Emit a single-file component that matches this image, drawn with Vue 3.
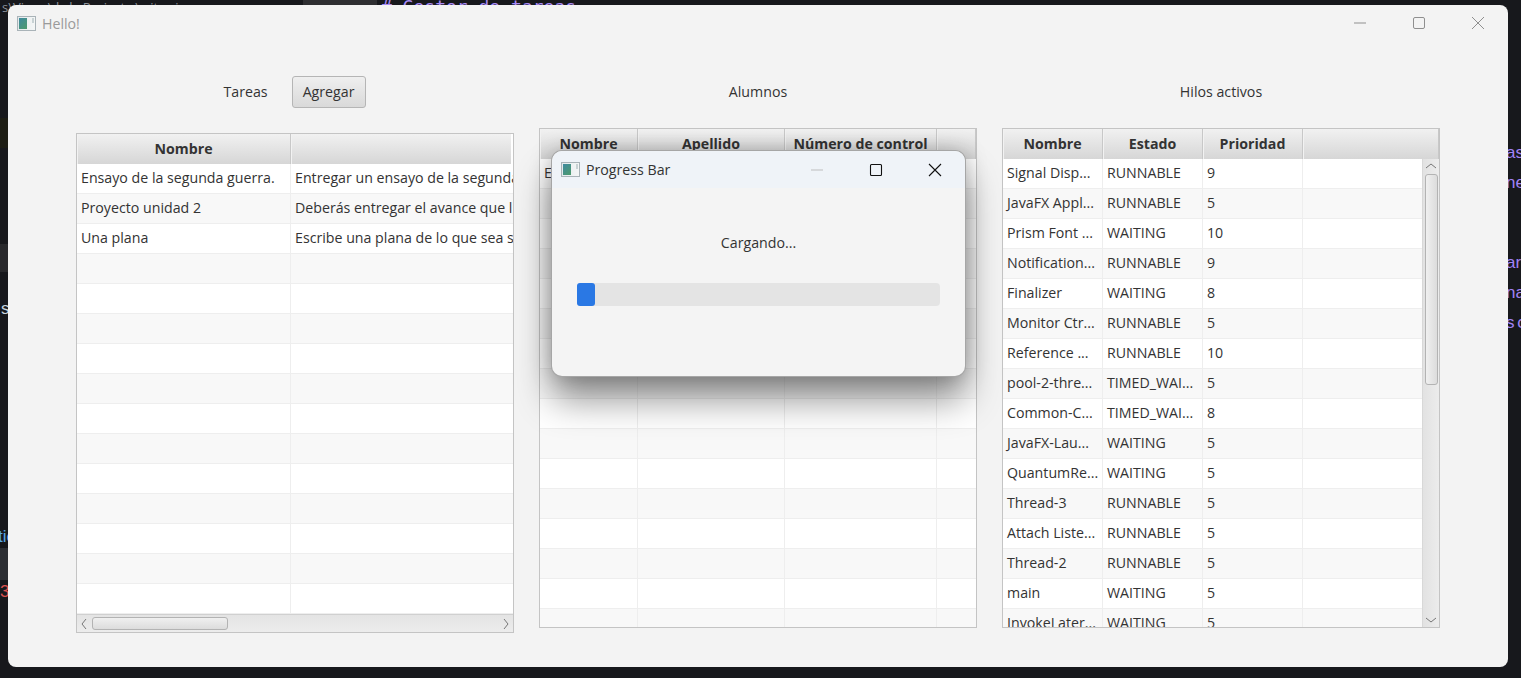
<script setup>
const tasks = [
  ["Ensayo de la segunda guerra.", "Entregar un ensayo de la segunda guerra mundial"],
  ["Proyecto unidad 2", "Deberás entregar el avance que llevas del proyecto"],
  ["Una plana", "Escribe una plana de lo que sea sobre el tema"],
];
const threads = [
  ["Signal Disp...", "RUNNABLE", "9"],
  ["JavaFX Appl...", "RUNNABLE", "5"],
  ["Prism Font ...", "WAITING", "10"],
  ["Notification...", "RUNNABLE", "9"],
  ["Finalizer", "WAITING", "8"],
  ["Monitor Ctr...", "RUNNABLE", "5"],
  ["Reference ...", "RUNNABLE", "10"],
  ["pool-2-thre...", "TIMED_WAI...", "5"],
  ["Common-C...", "TIMED_WAI...", "8"],
  ["JavaFX-Lau...", "WAITING", "5"],
  ["QuantumRe...", "WAITING", "5"],
  ["Thread-3", "RUNNABLE", "5"],
  ["Attach Liste...", "RUNNABLE", "5"],
  ["Thread-2", "RUNNABLE", "5"],
  ["main", "WAITING", "5"],
  ["InvokeLater...", "WAITING", "5"],
];

const taskRows = Array.from({ length: 16 }, (_, i) => tasks[i] || ["", ""]);
const studentRows = Array.from({ length: 16 }, (_, i) => (i === 0 ? "E" : ""));
</script>

<template>
  <div class="desktop">
    <span class="bg-band tab"></span>
    <div class="bg-text heading"># Gestor de tareas</div>
    <div class="bg-text crumbs">s\Vi · · · \ l · l · Project · \ · it · · i</div>
    <span class="bg-band yellow"></span>
    <span class="bg-band grey"></span>
    <span class="bg-band slate"></span>
    <span class="bg-frag left" style="top: 299px">sc</span>
    <span class="bg-frag left blue" style="top: 527px">tic</span>
    <span class="bg-frag left red" style="top: 582px">3</span>
    <span class="bg-frag right" style="top: 143px">as</span>
    <span class="bg-frag right" style="top: 173px">ne</span>
    <span class="bg-frag right" style="top: 253px">ar</span>
    <span class="bg-frag right" style="top: 283px">na</span>
    <span class="bg-frag right" style="top: 313px">s c</span>

    <section class="window">
      <header class="titlebar">
        <span class="app-icon"><i></i><b></b></span>
        <span class="title">Hello!</span>
        <div class="controls">
          <svg width="14" height="14" viewBox="0 0 14 14"><path d="M1 7h12" /></svg>
          <svg width="14" height="14" viewBox="0 0 14 14"><rect x="1.5" y="1.5" width="11" height="11" rx="1.5" /></svg>
          <svg width="14" height="14" viewBox="0 0 14 14"><path d="M1 1l12 12M13 1L1 13" /></svg>
        </div>
      </header>

      <div class="columns">
        <div class="column">
          <div class="col-head first">
            <span class="label">Tareas</span>
            <button class="add" type="button">Agregar</button>
          </div>
          <div class="table tasks">
            <div class="thead">
              <div class="th" style="width: 214px">Nombre</div>
              <div class="th grow"></div>
            </div>
            <div class="tbody">
              <div v-for="(row, i) in taskRows" :key="i" class="tr" :class="{ odd: i % 2 }">
                <div class="td" style="width: 214px">{{ row[0] }}</div>
                <div class="td grow">{{ row[1] }}</div>
              </div>
            </div>
            <div class="hscroll">
              <svg width="8" height="12" viewBox="0 0 8 12"><path d="M6 1L2 6l4 5" /></svg>
              <span class="hthumb"></span>
              <svg class="end" width="8" height="12" viewBox="0 0 8 12"><path d="M2 1l4 5-4 5" /></svg>
            </div>
          </div>
        </div>

        <div class="column raised">
          <div class="col-head"><span class="label">Alumnos</span></div>
          <div class="table">
            <div class="thead">
              <div class="th" style="width: 98px">Nombre</div>
              <div class="th" style="width: 147px">Apellido</div>
              <div class="th" style="width: 152px">Número de control</div>
              <div class="th grow"></div>
            </div>
            <div class="tbody">
              <div v-for="(name, i) in studentRows" :key="i" class="tr" :class="{ odd: i % 2 }">
                <div class="td" style="width: 98px">{{ name }}</div>
                <div class="td" style="width: 147px"></div>
                <div class="td" style="width: 152px"></div>
                <div class="td grow"></div>
              </div>
            </div>
          </div>
        </div>

        <div class="column raised">
          <div class="col-head"><span class="label">Hilos activos</span></div>
          <div class="table">
            <div class="thead">
              <div class="th" style="width: 100px">Nombre</div>
              <div class="th" style="width: 100px">Estado</div>
              <div class="th" style="width: 100px">Prioridad</div>
              <div class="th grow"></div>
            </div>
            <div class="body-wrap">
              <div class="tbody">
                <div v-for="(row, i) in threads" :key="i" class="tr" :class="{ odd: i % 2 }">
                  <div class="td" style="width: 100px">{{ row[0] }}</div>
                  <div class="td" style="width: 100px">{{ row[1] }}</div>
                  <div class="td" style="width: 100px">{{ row[2] }}</div>
                  <div class="td grow"></div>
                </div>
              </div>
              <div class="vscroll">
                <svg width="12" height="8" viewBox="0 0 12 8"><path d="M1 6l5-4 5 4" /></svg>
                <span class="vthumb"></span>
                <svg class="vend" width="12" height="8" viewBox="0 0 12 8"><path d="M1 2l5 4 5-4" /></svg>
              </div>
            </div>
          </div>
        </div>
      </div>
    </section>

    <section class="dialog">
      <header class="dialog-bar">
        <span class="app-icon"><i></i><b></b></span>
        <span class="dialog-title">Progress Bar</span>
        <div class="dialog-controls">
          <svg width="14" height="14" viewBox="0 0 14 14"><path class="faint" d="M1 7h12" /></svg>
          <svg width="14" height="14" viewBox="0 0 14 14"><rect x="1.5" y="1.5" width="11" height="11" rx="1" /></svg>
          <svg width="14" height="14" viewBox="0 0 14 14"><path d="M1 1l12 12M13 1L1 13" /></svg>
        </div>
      </header>
      <div class="dialog-body">
        <div class="loading">Cargando...</div>
        <div class="track"><div class="bar"></div></div>
      </div>
    </section>
  </div>
</template>

<style>
html,
body {
  margin: 0;
  overflow: hidden;
  background: #17181c;
}
</style>

<style scoped>
.desktop {
  position: relative;
  width: 1521px;
  height: 678px;
  overflow: hidden;
  background: #17181c;
  font-family: "Open Sans", "Noto Sans", sans-serif;
  font-size: 14.2px;
  color: #333;
}

.bg-text {
  position: absolute;
  white-space: nowrap;
}

.heading {
  left: 381px;
  top: -4px;
  font-family: "DejaVu Sans Mono", monospace;
  font-size: 18px;
  color: #a98bf5;
}

.crumbs {
  left: 2px;
  top: -2px;
  font-size: 13px;
  color: #8d939b;
}

.bg-band {
  position: absolute;
  left: 0;
  width: 8px;
}

.bg-band.tab {
  left: 303px;
  top: 0;
  width: 74px;
  height: 5px;
  background: #2e2e31;
}

.yellow {
  top: 118px;
  height: 30px;
  background: #1d1d14;
}

.grey {
  top: 244px;
  height: 28px;
  background: #28282b;
}

.slate {
  top: 548px;
  height: 32px;
  background: #2c2e33;
}

.bg-frag {
  position: absolute;
  font-family: "Liberation Sans", sans-serif;
  font-size: 17px;
  line-height: 20px;
  color: #a283f5;
  white-space: nowrap;
}

.bg-frag.left {
  left: 1px;
  color: #c9d4de;
}

.bg-frag.left.blue {
  left: -2px;
  color: #5aa7e6;
}

.bg-frag.left.red {
  left: 0;
  color: #d9504f;
}

.bg-frag.right {
  left: 1506px;
  word-spacing: -2px;
}

.window {
  position: absolute;
  left: 8px;
  top: 5px;
  width: 1500px;
  height: 662px;
  border-radius: 8px;
  background: #f3f3f3;
  overflow: hidden;
}

.titlebar {
  display: flex;
  align-items: center;
  height: 36px;
  padding-left: 9px;
  color: #9a9a9a;
}

.app-icon {
  display: flex;
  flex: none;
  width: 19px;
  height: 15px;
  padding: 1px;
  box-sizing: border-box;
  border: 1px solid #a9b3b8;
  background: linear-gradient(90deg, #e4eaec, #f4f6f6);
}

.app-icon i {
  width: 8px;
  background: linear-gradient(135deg, #3f8aa0, #4d9a6b);
}

.app-icon b {
  width: 2px;
  height: 5px;
  margin-left: 5px;
  background: #c8d2d4;
}

.title {
  margin-left: 6px;
}

.controls {
  display: flex;
  gap: 45px;
  margin-left: auto;
  margin-right: 23px;
}

.controls svg {
  fill: none;
  stroke: #8f8f8f;
  stroke-width: 1;
}

.columns {
  display: flex;
  gap: 25px;
  padding: 35px 68px 0;
}

.column {
  width: 438px;
}

.col-head {
  display: flex;
  align-items: center;
  justify-content: center;
  gap: 25px;
  height: 32px;
  margin-bottom: 25px;
  color: #333;
}

.col-head.first {
  gap: 24px;
  padding-right: 1px;
}

.column.raised .col-head {
  margin-bottom: 20px;
}

.label {
  padding-bottom: 2px;
}

.add {
  width: 74px;
  height: 32px;
  padding: 0 0 2px;
  border: 1px solid #b5b5b5;
  border-radius: 3px;
  background: linear-gradient(#efefef, #d9d9d9);
  color: #333;
  font: inherit;
}

.table {
  display: flex;
  flex-direction: column;
  height: 500px;
  box-sizing: border-box;
  border: 1px solid #c4c4c4;
  background: #fff;
  overflow: hidden;
}

.thead {
  display: flex;
  flex: none;
  height: 30px;
}

.th {
  flex: none;
  height: 30px;
  box-sizing: border-box;
  border-right: 1px solid #c8c8c8;
  background: linear-gradient(#f1f1f1, #d6d6d6);
  box-shadow: inset 1px 0 0 #f2f2f2;
  font-weight: 700;
  line-height: 29px;
  text-align: center;
  color: #333;
}

.th.grow {
  flex: 1;
}

.tasks .th.grow {
  border-right: 2px solid #fff;
}

.tbody {
  flex: 1;
  min-width: 0;
  min-height: 0;
  overflow: hidden;
}

.tr {
  display: flex;
  height: 30px;
  box-sizing: border-box;
  border-bottom: 1px solid #eee;
  background: #fff;
}

.tr.odd {
  background: #f8f8f8;
}

.td {
  flex: none;
  box-sizing: border-box;
  padding-left: 4px;
  border-right: 1px solid #eee;
  line-height: 28px;
  white-space: nowrap;
  overflow: hidden;
}

.td.grow {
  flex: 1;
  border-right: 0;
}

.hscroll {
  display: flex;
  flex: none;
  align-items: center;
  height: 18px;
  padding: 0 3px;
  border-top: 1px solid #d0d0d0;
  box-sizing: border-box;
  background: linear-gradient(#e4e4e4, #ececec);
}

.hscroll svg,
.vscroll svg {
  flex: none;
  fill: none;
  stroke: #777;
  stroke-width: 1;
}

.hthumb {
  width: 136px;
  height: 13px;
  margin-left: 4px;
  box-sizing: border-box;
  border: 1px solid #b3b3b3;
  border-radius: 3px;
  background: linear-gradient(#f0f0f0, #dcdcdc);
}

.end {
  margin-left: auto;
}

.body-wrap {
  display: flex;
  flex: 1;
  min-height: 0;
}

.vscroll {
  display: flex;
  flex: none;
  flex-direction: column;
  align-items: center;
  width: 17px;
  padding: 3px 0;
  box-sizing: border-box;
  border-left: 1px solid #d8d8d8;
  background: linear-gradient(90deg, #e2e2e2, #ececec);
}

.vthumb {
  flex: none;
  width: 13px;
  height: 211px;
  margin-top: 4px;
  box-sizing: border-box;
  border: 1px solid #b3b3b3;
  border-radius: 3px;
  background: linear-gradient(90deg, #f0f0f0, #dcdcdc);
}

.vend {
  margin-top: auto;
}

.dialog {
  position: absolute;
  left: 552px;
  top: 151px;
  width: 413px;
  height: 225px;
  border-radius: 10px;
  background: #f4f4f4;
  box-shadow: 0 0 0 1px #a6a6a6, 0 24px 36px rgba(0, 0, 0, 0.42), 0 0 22px rgba(0, 0, 0, 0.25);
  overflow: hidden;
}

.dialog-bar {
  display: flex;
  align-items: center;
  height: 37px;
  padding-left: 9px;
  background: #eff3f8;
}

.dialog-title {
  margin-left: 6px;
  color: #333;
}

.dialog-controls {
  display: flex;
  gap: 45px;
  margin-left: auto;
  margin-right: 23px;
}

.dialog-controls svg {
  fill: none;
  stroke: #111;
  stroke-width: 1.1;
}

.dialog-controls .faint {
  stroke: #bdbdbd;
}

.dialog-body {
  padding: 43px 25px 0;
}

.loading {
  height: 24px;
  line-height: 24px;
  text-align: center;
  color: #333;
}

.track {
  height: 23px;
  margin-top: 28px;
  border-radius: 4px;
  background: #e4e4e4;
}

.bar {
  width: 18px;
  height: 23px;
  border-radius: 3px;
  background: #2a78e4;
}
</style>
